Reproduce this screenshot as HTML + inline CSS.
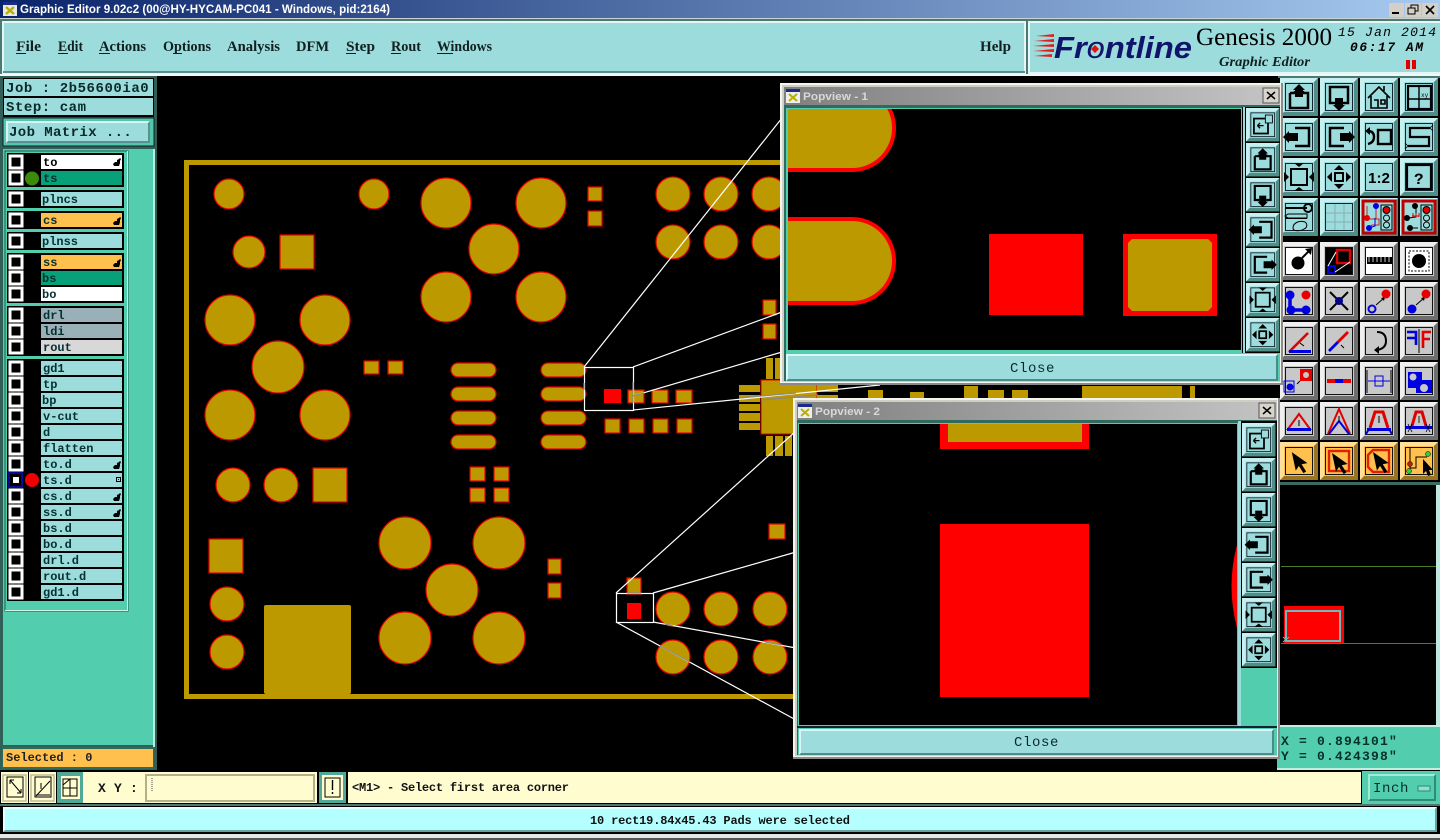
<!DOCTYPE html>
<html><head><meta charset="utf-8"><title>Graphic Editor</title>
<style>
html,body{margin:0;padding:0;background:#000;width:1440px;height:840px;overflow:hidden}
svg{display:block;position:absolute;left:0;top:0}
.m{font-family:"Liberation Mono",monospace;font-weight:bold;font-size:12px;fill:#0a2a2a}
.l{font-family:"Liberation Mono",monospace;font-weight:bold;font-size:12px;fill:#063030}
.s{font-family:"Liberation Serif",serif;font-weight:bold;font-size:15px;fill:#102020}
.g{font-family:"Liberation Mono",monospace;font-weight:bold;font-size:14px;fill:#0a2a2a;letter-spacing:.55px}
</style></head><body>
<svg width="1440" height="840" viewBox="0 0 1440 840" xmlns="http://www.w3.org/2000/svg">
<defs>
<linearGradient id="tb" x1="0" x2="1" y1="0" y2="0"><stop offset="0" stop-color="#0a246a"/><stop offset="1" stop-color="#a6caf0"/></linearGradient>
<linearGradient id="pt" x1="0" x2="1" y1="0" y2="0"><stop offset="0" stop-color="#808080"/><stop offset="1" stop-color="#c4c4c4"/></linearGradient>

<g id="bt"><rect width="38" height="38" fill="#4f8f88"/><polygon points="0,0 38,0 34,4 4,4 4,34 0,38" fill="#c9f0f0"/><rect x="4" y="4" width="30" height="30" fill="#9cdcdc"/><rect x="5.5" y="5.5" width="27" height="27" fill="none" stroke="#123" stroke-width="1"/></g>
<g id="bg"><rect width="38" height="38" fill="#6e6e6e"/><polygon points="0,0 38,0 34,4 4,4 4,34 0,38" fill="#efefef"/><rect x="4" y="4" width="30" height="30" fill="#c8c8c8"/><rect x="5.5" y="5.5" width="27" height="27" fill="none" stroke="#111" stroke-width="1"/></g>
<g id="bw"><rect width="38" height="38" fill="#6e6e6e"/><polygon points="0,0 38,0 34,4 4,4 4,34 0,38" fill="#efefef"/><rect x="4" y="4" width="30" height="30" fill="#c8c8c8"/><rect x="5.5" y="5.5" width="27" height="27" fill="#fff" stroke="#111" stroke-width="1"/></g>
<g id="bo"><rect width="38" height="38" fill="#9a7420"/><polygon points="0,0 38,0 34,4 4,4 4,34 0,38" fill="#ffe09a"/><rect x="4" y="4" width="30" height="30" fill="#ffc04d"/><rect x="5.5" y="5.5" width="27" height="27" fill="none" stroke="#111" stroke-width="1"/></g>
<g id="br"><rect width="38" height="38" fill="#4f8f88"/><polygon points="0,0 38,0 34,4 4,4 4,34 0,38" fill="#c9f0f0"/><rect x="3" y="3" width="32" height="32" fill="#9cdcdc" stroke="#c00000" stroke-width="3"/></g>

<g id="iup"><path d="M10 15h5v-2M23 13v2h5v15H10V15" fill="none" stroke="#000" stroke-width="2.5"/><polygon points="19,6 25,12 23,12 23,19 15,19 15,12 13,12"/></g>
<g id="idn"><path d="M15 25h-5V9h18v16h-5" fill="none" stroke="#000" stroke-width="2.5"/><polygon points="19,33 25,27 23,27 23,20 15,20 15,27 13,27"/></g>
<g id="ilf"><path d="M15 10h14v18H15" fill="none" stroke="#000" stroke-width="2.5"/><polygon points="3,19 9,13 9,15 18,15 18,23 9,23 9,25"/></g>
<g id="irt"><path d="M24 10H10v18h14" fill="none" stroke="#000" stroke-width="2.5"/><polygon points="35,19 29,13 29,15 20,15 20,23 29,23 29,25"/></g>
<g id="ifit"><rect x="11" y="11" width="16" height="16" fill="none" stroke="#000" stroke-width="2"/><polygon points="19,9 14,5 24,5"/><polygon points="19,29 14,33 24,33"/><polygon points="9,19 4,14 4,24"/><polygon points="29,19 34,14 34,24"/></g>
<g id="izoom"><rect x="15" y="15" width="8" height="8" fill="none" stroke="#000" stroke-width="2"/><polygon points="19,7 14,12 24,12"/><polygon points="19,31 14,26 24,26"/><polygon points="7,19 12,14 12,24"/><polygon points="31,19 26,14 26,24"/></g>
<g id="ifirst"><rect x="9" y="12" width="16" height="17" fill="none" stroke="#000" stroke-width="2"/><rect x="22" y="8" width="8" height="9" fill="#9cdcdc" stroke="#000"/><path d="M20 20h-7M13 20l3-3M13 20l3 3" stroke="#000" fill="none" stroke-width="1.5"/></g>
</defs>

<rect width="1440" height="840" fill="#000"/>
<!-- Title bar -->
<rect width="1440" height="18" fill="url(#tb)"/>
<rect y="18" width="1440" height="1" fill="#c8d4d4"/>
<g><rect x="3" y="2" width="14" height="14" fill="#e8e8e8"/><rect x="3" y="2" width="14" height="3" fill="#1a2a8a"/><path d="M6 7l8 7M14 7l-8 7" stroke="#b8b000" stroke-width="2.4"/></g>
<text x="20" y="13" textLength="370" lengthAdjust="spacingAndGlyphs" font-family="Liberation Sans,sans-serif" font-weight="bold" font-size="12" fill="#fff">Graphic Editor 9.02c2 (00@HY-HYCAM-PC041 - Windows, pid:2164)</text>
<g><rect x="1389" y="3" width="15" height="14" fill="#d4d0c8"/><rect x="1392" y="12" width="7" height="2"/><rect x="1405" y="3" width="16" height="14" fill="#d4d0c8"/><rect x="1411" y="5" width="7" height="6" fill="none" stroke="#000"/><rect x="1408" y="8" width="7" height="6" fill="#d4d0c8" stroke="#000"/><rect x="1422" y="3" width="16" height="14" fill="#d4d0c8"/><path d="M1426 6l8 8M1434 6l-8 8" stroke="#000" stroke-width="1.6"/></g>

<!-- Menu bar -->
<rect x="0" y="19" width="1440" height="57" fill="#4a7a72"/>
<rect x="2" y="21" width="1024" height="53" fill="#e4f6f6"/><rect x="4" y="23" width="1020" height="49" fill="#9cdcdc"/><rect x="3" y="71" width="1022" height="2" fill="#5c8f8c"/>
<rect x="1028" y="21" width="412" height="53" fill="#e4f6f6"/><rect x="1030" y="23" width="410" height="49" fill="#9cdcdc"/>
<rect y="74" width="1440" height="2" fill="#eefafa"/>
<g>
<text class="s" x="16" y="51" textLength="25" lengthAdjust="spacingAndGlyphs">File</text><text class="s" x="58" y="51" textLength="25" lengthAdjust="spacingAndGlyphs">Edit</text><text class="s" x="99" y="51" textLength="47" lengthAdjust="spacingAndGlyphs">Actions</text><text class="s" x="163" y="51" textLength="48" lengthAdjust="spacingAndGlyphs">Options</text><text class="s" x="227" y="51" textLength="53" lengthAdjust="spacingAndGlyphs">Analysis</text><text class="s" x="296" y="51" textLength="33" lengthAdjust="spacingAndGlyphs">DFM</text><text class="s" x="346" y="51" textLength="29" lengthAdjust="spacingAndGlyphs">Step</text><text class="s" x="391" y="51" textLength="30" lengthAdjust="spacingAndGlyphs">Rout</text><text class="s" x="437" y="51" textLength="55" lengthAdjust="spacingAndGlyphs">Windows</text><text class="s" x="980" y="51" textLength="31" lengthAdjust="spacingAndGlyphs">Help</text>
</g>
<g fill="#102020"><rect x="16" y="53" width="10" height="1"/><rect x="58" y="53" width="10" height="1"/><rect x="99" y="53" width="11" height="1"/><rect x="173" y="53" width="9" height="1"/><rect x="346" y="53" width="10" height="1"/><rect x="391" y="53" width="10" height="1"/><rect x="437" y="53" width="16" height="1"/></g>

<!-- Logo -->
<g fill="#e02020"><polygon points="1036,36 1054,34 1054,37"/><polygon points="1034,41 1054,39 1054,42"/><polygon points="1033,46 1054,44 1054,47"/><polygon points="1033,51 1054,49 1054,52"/><polygon points="1034,56 1052,54 1052,57"/></g>
<text x="1054" y="58" textLength="138" lengthAdjust="spacingAndGlyphs" font-family="Liberation Sans,sans-serif" font-weight="bold" font-style="italic" font-size="31" fill="#10146a">Fr<tspan font-weight="normal">o</tspan>ntline</text>
<polygon points="1095,45 1099,49 1095,53 1091,49" fill="#e01010"/>
<text x="1196" y="45" textLength="136" lengthAdjust="spacingAndGlyphs" font-family="Liberation Serif,serif" font-size="25" fill="#000">Genesis 2000</text>
<text x="1219" y="66" textLength="91" lengthAdjust="spacingAndGlyphs" font-family="Liberation Serif,serif" font-weight="bold" font-style="italic" font-size="14" fill="#102020">Graphic Editor</text>
<text x="1338" y="36" textLength="98" font-family="Liberation Mono,monospace" font-style="italic" font-size="13" fill="#000">15 Jan 2014</text>
<text x="1350" y="51" textLength="73" font-family="Liberation Mono,monospace" font-style="italic" font-weight="bold" font-size="13" fill="#000">06:17 AM</text>
<rect x="1406" y="60" width="4" height="9" fill="#e00000"/><rect x="1412" y="60" width="4" height="9" fill="#e00000"/>

<!-- Left panel top -->
<rect x="0" y="76" width="157" height="694" fill="#2f5f56"/>
<rect x="3" y="78" width="151" height="39" fill="#000"/>
<rect x="4" y="79" width="149" height="17" fill="#9cdcdc"/><rect x="4" y="98" width="149" height="17" fill="#9cdcdc"/>
<text class="g" x="6" y="92">Job : 2b56600ia0</text>
<text class="g" x="6" y="111">Step: cam</text>
<rect x="3" y="118" width="151" height="28" fill="#52c8aa" stroke="#123" stroke-width="1"/>
<rect x="6" y="121" width="144" height="22" fill="#5a9090"/><polygon points="6,121 150,121 148,123 8,123 8,141 6,143" fill="#d8f4f4"/><rect x="8" y="123" width="140" height="18" fill="#9cdcdc"/>
<text class="g" x="9" y="136" style="letter-spacing:.4px">Job Matrix ...</text>

<!-- Layer panel -->
<rect x="0" y="147" width="155" height="600" fill="#2f5f56"/>
<rect x="3" y="149" width="150" height="596" fill="#52cdad"/>
<rect x="153" y="149" width="2" height="598" fill="#b8eedd"/>
<rect x="5" y="151" width="123" height="460" fill="#52cdad" stroke="#1f5a4c" stroke-width="1"/>
<rect x="127" y="151" width="1" height="460" fill="#cff3e6"/><rect x="5" y="610" width="123" height="1" fill="#cff3e6"/>
<g fill="#000"><rect x="7" y="153" width="117" height="34"/><rect x="7" y="190" width="117" height="18"/><rect x="7" y="211" width="117" height="18"/><rect x="7" y="232" width="117" height="18"/><rect x="7" y="253" width="117" height="50"/><rect x="7" y="306" width="117" height="50"/><rect x="7" y="359" width="117" height="242"/></g>
<g fill="#9cdcdc">
<rect x="41" y="155" width="81" height="14" fill="#fff"/><rect x="41" y="171" width="81" height="14" fill="#08a078"/><rect x="41" y="192" width="81" height="14"/><rect x="41" y="213" width="81" height="14" fill="#ffc04d"/><rect x="41" y="234" width="81" height="14"/><rect x="41" y="255" width="81" height="14" fill="#ffc04d"/><rect x="41" y="271" width="81" height="14" fill="#08a078"/><rect x="41" y="287" width="81" height="14" fill="#fff"/><rect x="41" y="308" width="81" height="14" fill="#9ab0b8"/><rect x="41" y="324" width="81" height="14" fill="#9ab0b8"/><rect x="41" y="340" width="81" height="14" fill="#d8d8d8"/>
<rect x="41" y="361" width="81" height="14"/><rect x="41" y="377" width="81" height="14"/><rect x="41" y="393" width="81" height="14"/><rect x="41" y="409" width="81" height="14"/><rect x="41" y="425" width="81" height="14"/><rect x="41" y="441" width="81" height="14"/><rect x="41" y="457" width="81" height="14"/><rect x="41" y="473" width="81" height="14"/><rect x="41" y="489" width="81" height="14"/><rect x="41" y="505" width="81" height="14"/><rect x="41" y="521" width="81" height="14"/><rect x="41" y="537" width="81" height="14"/><rect x="41" y="553" width="81" height="14"/><rect x="41" y="569" width="81" height="14"/><rect x="41" y="585" width="81" height="14"/>
</g>
<g fill="none" stroke="#fff" stroke-width="3">
<rect x="10" y="156" width="12" height="12"/><rect x="10" y="172" width="12" height="12"/><rect x="10" y="193" width="12" height="12"/><rect x="10" y="214" width="12" height="12"/><rect x="10" y="235" width="12" height="12"/><rect x="10" y="256" width="12" height="12"/><rect x="10" y="272" width="12" height="12"/><rect x="10" y="288" width="12" height="12"/><rect x="10" y="309" width="12" height="12"/><rect x="10" y="325" width="12" height="12"/><rect x="10" y="341" width="12" height="12"/><rect x="10" y="362" width="12" height="12"/><rect x="10" y="378" width="12" height="12"/><rect x="10" y="394" width="12" height="12"/><rect x="10" y="410" width="12" height="12"/><rect x="10" y="426" width="12" height="12"/><rect x="10" y="442" width="12" height="12"/><rect x="10" y="458" width="12" height="12"/><rect x="10" y="490" width="12" height="12"/><rect x="10" y="506" width="12" height="12"/><rect x="10" y="522" width="12" height="12"/><rect x="10" y="538" width="12" height="12"/><rect x="10" y="554" width="12" height="12"/><rect x="10" y="570" width="12" height="12"/><rect x="10" y="586" width="12" height="12"/>
</g>
<rect x="8" y="472" width="15" height="16" fill="#0a0a90"/><rect x="10" y="474" width="11" height="12" fill="#000"/><rect x="13" y="477" width="6" height="6" fill="#fff"/>
<circle cx="32" cy="178.5" r="7" fill="#3c8a0c"/><circle cx="32" cy="480" r="7" fill="#f00000"/>
<text class="l" x="43" y="166" style="fill:#000">to</text><text class="l" x="43" y="182">ts</text><text class="l" x="42" y="203">plncs</text><text class="l" x="43" y="224">cs</text><text class="l" x="42" y="245">plnss</text><text class="l" x="43" y="266">ss</text><text class="l" x="42" y="282">bs</text><text class="l" x="42" y="298">bo</text><text class="l" x="43" y="319">drl</text><text class="l" x="43" y="335">ldi</text><text class="l" x="43" y="351">rout</text><text class="l" x="43" y="372">gd1</text><text class="l" x="43" y="388">tp</text><text class="l" x="42" y="404">bp</text><text class="l" x="43" y="420">v-cut</text><text class="l" x="43" y="436">d</text><text class="l" x="43" y="452">flatten</text><text class="l" x="43" y="468">to.d</text><text class="l" x="43" y="484">ts.d</text><text class="l" x="43" y="500">cs.d</text><text class="l" x="43" y="516">ss.d</text><text class="l" x="43" y="532">bs.d</text><text class="l" x="43" y="548">bo.d</text><text class="l" x="43" y="564">drl.d</text><text class="l" x="43" y="580">rout.d</text><text class="l" x="43" y="596">gd1.d</text>
<g fill="#000"><path d="M113 164l2-2h2v-2l2-1 1-1 1 1-1 2v2l-1 3h-5z"/><path d="M113 223l2-2h2v-2l2-1 1-1 1 1-1 2v2l-1 3h-5z"/><path d="M113 265l2-2h2v-2l2-1 1-1 1 1-1 2v2l-1 3h-5z"/><path d="M113 467l2-2h2v-2l2-1 1-1 1 1-1 2v2l-1 3h-5z"/><path d="M113 499l2-2h2v-2l2-1 1-1 1 1-1 2v2l-1 3h-5z"/><path d="M113 515l2-2h2v-2l2-1 1-1 1 1-1 2v2l-1 3h-5z"/></g>
<rect x="116.500" y="477.500" width="4" height="4" fill="none" stroke="#000"/><rect x="118" y="479" width="1" height="1"/>

<!-- Selected -->
<rect x="2" y="747" width="152" height="22" fill="#2f6a5e"/><rect x="3" y="749" width="150" height="18" fill="#ffc04d"/>
<text class="m" x="6" y="761" style="fill:#222">Selected : 0</text>

<!-- PCB -->
<g fill="#bd9900"><rect x="184" y="160" width="620" height="5"/><rect x="184" y="160" width="5" height="538"/><rect x="184" y="694" width="620" height="5"/><rect x="264" y="605" width="87" height="89" rx="2"/></g>
<g fill="#bd9900" stroke="#e80000" stroke-width="1.2">
<circle cx="229" cy="194" r="15"/><circle cx="374" cy="194" r="15"/><circle cx="446" cy="203" r="25"/><circle cx="541" cy="203" r="25"/><circle cx="494" cy="249" r="25"/><circle cx="446" cy="297" r="25"/><circle cx="541" cy="297" r="25"/><circle cx="249" cy="252" r="16"/>
<rect x="280" y="235" width="34" height="34"/>
<circle cx="230" cy="320" r="25"/><circle cx="325" cy="320" r="25"/><circle cx="278" cy="367" r="26"/><circle cx="230" cy="415" r="25"/><circle cx="325" cy="415" r="25"/>
<rect x="588" y="187" width="14" height="14"/><rect x="588" y="211" width="14" height="15"/>
<circle cx="673" cy="194" r="17"/><circle cx="721" cy="194" r="17"/><circle cx="769" cy="194" r="17"/><circle cx="673" cy="242" r="17"/><circle cx="721" cy="242" r="17"/><circle cx="769" cy="242" r="17"/>
<rect x="763" y="300" width="13" height="15"/><rect x="763" y="324" width="13" height="15"/>
<rect x="364" y="361" width="15" height="13"/><rect x="388" y="361" width="15" height="13"/>
<rect x="451" y="363" width="45" height="14" rx="7"/><rect x="451" y="387" width="45" height="14" rx="7"/><rect x="451" y="411" width="45" height="14" rx="7"/><rect x="451" y="435" width="45" height="14" rx="7"/>
<rect x="541" y="363" width="45" height="14" rx="7"/><rect x="541" y="387" width="45" height="14" rx="7"/><rect x="541" y="411" width="45" height="14" rx="7"/><rect x="541" y="435" width="45" height="14" rx="7"/>
<rect x="628" y="390" width="16" height="13"/><rect x="652" y="390" width="16" height="13"/><rect x="676" y="390" width="16" height="13"/>
<rect x="605" y="419" width="15" height="14"/><rect x="629" y="419" width="15" height="14"/><rect x="653" y="419" width="15" height="14"/><rect x="677" y="419" width="15" height="14"/>
<rect x="769" y="524" width="16" height="15"/>
<rect x="470" y="467" width="15" height="14"/><rect x="494" y="467" width="15" height="14"/><rect x="470" y="488" width="15" height="14"/><rect x="494" y="488" width="15" height="14"/>
<circle cx="233" cy="485" r="17"/><circle cx="281" cy="485" r="17"/><rect x="313" y="468" width="34" height="34"/>
<rect x="209" y="539" width="34" height="34"/><circle cx="227" cy="604" r="17"/><circle cx="227" cy="652" r="17"/>
<circle cx="405" cy="543" r="26"/><circle cx="499" cy="543" r="26"/><circle cx="452" cy="590" r="26"/><circle cx="405" cy="638" r="26"/><circle cx="499" cy="638" r="26"/>
<rect x="548" y="559" width="13" height="15"/><rect x="548" y="583" width="13" height="15"/><rect x="627" y="578" width="14" height="16"/>
<circle cx="673" cy="609" r="17"/><circle cx="721" cy="609" r="17"/><circle cx="770" cy="609" r="17"/><circle cx="673" cy="657" r="17"/><circle cx="721" cy="657" r="17"/><circle cx="770" cy="657" r="17"/>
</g>
<rect x="604" y="389" width="17" height="14" fill="#f00"/><rect x="627" y="603" width="14" height="16" fill="#f00"/>
<!-- QFN -->
<g fill="#bd9900">
<rect x="761" y="380" width="56" height="54" stroke="#e00000" stroke-width="1"/>
<rect x="739" y="385" width="21" height="7"/><rect x="739" y="395" width="21" height="7"/><rect x="739" y="404" width="21" height="7"/><rect x="739" y="413" width="21" height="8"/><rect x="739" y="423" width="21" height="7"/>
<rect x="766" y="358" width="7" height="21"/><rect x="775" y="358" width="7" height="21"/><rect x="784" y="358" width="7" height="21"/><rect x="793" y="358" width="7" height="21"/>
<rect x="766" y="436" width="7" height="20"/><rect x="775" y="436" width="8" height="20"/><rect x="785" y="436" width="7" height="20"/>
<rect x="817" y="385" width="21" height="7"/><rect x="817" y="395" width="21" height="7"/>
<rect x="868" y="390" width="15" height="10"/><rect x="964" y="386" width="14" height="14"/><rect x="988" y="390" width="16" height="10"/><rect x="1012" y="390" width="16" height="10"/><rect x="1082" y="386" width="100" height="14"/><rect x="1190" y="386" width="5" height="14"/><rect x="910" y="392" width="14" height="8"/>
</g>
<!-- Zoom guide lines -->
<g fill="none" stroke="#fff" stroke-width="1.2">
<rect x="584.500" y="367.500" width="49" height="43"/>
<path d="M584 367L782 118M633 367L782 312M633 396L782 352M633 410L880 385"/>
<rect x="616.500" y="593.500" width="37" height="29"/>
<path d="M616 593L796 431M653 593L796 552M653 622L796 648M616 622L796 720"/>
</g>
<g fill="none" stroke="#888" stroke-width="1.2"><path d="M633 396L644 393M633 382L633 403M739 398L796 393M584 383L584 390M660 646L690 662M665 624L673 626M765 642L782 645M761 400L818 395M627 593L641 593"/></g>

<!-- Right toolbar -->
<rect x="1278" y="76" width="162" height="408" fill="#000"/>
<rect x="1278" y="76" width="162" height="2" fill="#4a7a72"/>
<use href="#bt" x="1280" y="78"/><use href="#bt" x="1320" y="78"/><use href="#bt" x="1360" y="78"/><use href="#bt" x="1400" y="78"/>
<use href="#bt" x="1280" y="118"/><use href="#bt" x="1320" y="118"/><use href="#bt" x="1360" y="118"/><use href="#bt" x="1400" y="118"/>
<use href="#bt" x="1280" y="158"/><use href="#bt" x="1320" y="158"/><use href="#bt" x="1360" y="158"/><use href="#bt" x="1400" y="158"/>
<use href="#bt" x="1280" y="198"/><use href="#bt" x="1320" y="198"/><use href="#br" x="1360" y="198"/><use href="#br" x="1400" y="198"/>
<use href="#bw" x="1280" y="242"/><use href="#bw" x="1320" y="242"/><use href="#bw" x="1360" y="242"/><use href="#bw" x="1400" y="242"/>
<use href="#bg" x="1280" y="282"/><use href="#bg" x="1320" y="282"/><use href="#bg" x="1360" y="282"/><use href="#bg" x="1400" y="282"/>
<use href="#bg" x="1280" y="322"/><use href="#bg" x="1320" y="322"/><use href="#bg" x="1360" y="322"/><use href="#bg" x="1400" y="322"/>
<use href="#bg" x="1280" y="362"/><use href="#bg" x="1320" y="362"/><use href="#bg" x="1360" y="362"/><use href="#bg" x="1400" y="362"/>
<use href="#bg" x="1280" y="402"/><use href="#bg" x="1320" y="402"/><use href="#bg" x="1360" y="402"/><use href="#bg" x="1400" y="402"/>
<use href="#bo" x="1280" y="442"/><use href="#bo" x="1320" y="442"/><use href="#bo" x="1360" y="442"/><use href="#bo" x="1400" y="442"/>
<!-- r0 -->
<use href="#iup" x="1280" y="78"/><use href="#idn" x="1320" y="78"/>
<g transform="translate(1360,78)" fill="none" stroke="#000" stroke-width="1.6"><path d="M8 20L19 9l11 11M11 18v12h16V18M14 22h4v8M21 22h4v4h-4zM24 8v5"/></g>
<g transform="translate(1400,78)" fill="none" stroke="#000"><rect x="8" y="8" width="23" height="23" stroke-width="2.2"/><path d="M19 8v23M8 21h23" stroke-width="1.4"/><text x="21" y="19" font-family="Liberation Mono,monospace" font-size="6" fill="#000" stroke="none">xy</text></g>
<!-- r1 -->
<use href="#ilf" x="1280" y="118"/><use href="#irt" x="1320" y="118"/>
<g transform="translate(1360,118)"><rect x="18" y="12" width="13" height="14" fill="none" stroke="#000" stroke-width="2.4"/><path d="M8 13c4 0 6 2 6 6s-2 6-6 7" fill="none" stroke="#000" stroke-width="2.4"/><polygon points="5,13 10,9 10,17"/></g>
<g transform="translate(1400,118)" fill="none" stroke="#000" stroke-width="2.2"><path d="M30 10H10v9h19v9H8"/><path d="M30 10l3-3M30 10l3 3M8 28l-3-3M8 28l-3 3" stroke-width=".8"/></g>
<!-- r2 -->
<use href="#ifit" x="1280" y="158"/><use href="#izoom" x="1320" y="158"/>
<text x="1368" y="183" font-family="Liberation Sans,sans-serif" font-weight="bold" font-size="15" textLength="22" lengthAdjust="spacingAndGlyphs">1:2</text>
<rect x="1407" y="165" width="24" height="24" fill="none" stroke="#000" stroke-width="2.2"/>
<text x="1414" y="184" font-family="Liberation Mono,monospace" font-weight="bold" font-size="16">?</text>
<!-- r3 -->
<g transform="translate(1280,198)"><path d="M5 10h22M5 20h22" stroke="#000" stroke-width="2"/><circle cx="28" cy="10" r="4" fill="none" stroke="#000" stroke-width="2"/><path d="M8 16h19v4H8l-3-2z" fill="#9cdcdc" stroke="#000"/><path d="M13 30c0-5 6-8 12-6 3 2 2 6-1 7-3 2-11 3-11-1z" fill="none" stroke="#000"/></g>
<g transform="translate(1320,198)" stroke="#88b0b0" fill="none"><path d="M15 6v26M24 6v26M6 15h26M6 24h26"/></g>
<g transform="translate(1360,198)"><rect x="21" y="7" width="11" height="25" fill="none" stroke="#000"/><circle cx="26.500" cy="12" r="3.500" fill="#e00000" stroke="#000"/><circle cx="26.500" cy="20" r="3" fill="none" stroke="#000"/><circle cx="26.500" cy="27" r="3" fill="none" stroke="#000"/><path d="M7 8v13h12v6h-7l-3 3M16 8v13" fill="none" stroke="#d02020"/><circle cx="16" cy="8" r="3" fill="#0000e0"/><circle cx="7" cy="20" r="3" fill="#e00000"/><circle cx="9" cy="30" r="3" fill="#0000e0"/><path d="M9 30l6-2v-8" fill="none" stroke="#0000e0"/></g>
<g transform="translate(1400,198)"><rect x="21" y="7" width="11" height="25" fill="none" stroke="#000"/><circle cx="26.500" cy="12" r="3.500" fill="#e00000" stroke="#000"/><circle cx="26.500" cy="20" r="3" fill="none" stroke="#000"/><circle cx="26.500" cy="27" r="3" fill="none" stroke="#000"/><path d="M9 20l7-1V9M9 30l9 0" fill="none" stroke="#000"/><circle cx="15" cy="8" r="3"/><circle cx="7" cy="20" r="3"/><circle cx="10" cy="30" r="3"/><path d="M12 18h7M13 15v4M16 15v4M19 15v4" stroke="#e00000" fill="none"/></g>
<!-- r4 -->
<g transform="translate(1280,242)"><circle cx="18" cy="21" r="6.500"/><path d="M22 16l7-7" stroke="#000" stroke-width="2"/><polygon points="32,6 31,13 25,7"/></g>
<g transform="translate(1320,242)"><rect x="6" y="6" width="26" height="26"/><rect x="17" y="8" width="13" height="13" fill="none" stroke="#e00000" stroke-width="2.4"/><rect x="8" y="24" width="7" height="7" fill="none" stroke="#0000e0" stroke-width="2"/><path d="M16 10L8 24M30 20L15 30" stroke="#fff"/></g>
<g transform="translate(1360,242)"><rect x="7" y="15" width="25" height="7"/><path d="M9 13v8M13 13v8M17 13v8M21 13v8M25 13v8M29 13v8" stroke="#fff" transform="translate(0,-1)" stroke-width=".8"/></g>
<g transform="translate(1400,242)"><rect x="9" y="9" width="20" height="20" fill="none" stroke="#000" stroke-dasharray="2 1.500"/><circle cx="19" cy="19" r="7"/></g>
<!-- r5 -->
<g transform="translate(1280,282)"><path d="M10 14v14h15" fill="none" stroke="#0000e0" stroke-width="3.500"/><circle cx="10" cy="13" r="4.500" fill="#0000e0"/><circle cx="11" cy="28" r="4.500" fill="#0000e0"/><circle cx="26" cy="28" r="4.500" fill="#0000e0"/><circle cx="26" cy="13" r="4.500" fill="#e80000"/></g>
<g transform="translate(1320,282)"><path d="M10 10l18 18M28 10L10 28" stroke="#000" stroke-width="2"/><circle cx="19" cy="19" r="4" fill="#00008a"/></g>
<g transform="translate(1360,282)"><circle cx="12" cy="27" r="3.500" fill="none" stroke="#0000e0" stroke-width="2"/><path d="M16 23l8-7" stroke="#000"/><polygon points="25,15 24,19 21,16"/><circle cx="26" cy="12" r="4.500" fill="#e80000"/></g>
<g transform="translate(1400,282)"><circle cx="12" cy="27" r="4.500" fill="#0000e0"/><path d="M16 23l8-7" stroke="#000"/><polygon points="25,15 24,19 21,16"/><circle cx="26" cy="12" r="4.500" fill="#e80000"/></g>
<!-- r6 -->
<g transform="translate(1280,322)"><path d="M9 30L28 11" stroke="#e00000" stroke-width="2.600"/><rect x="9" y="28" width="22" height="3" fill="#0000e0"/><path d="M24 24l-4-3" stroke="#000"/></g>
<g transform="translate(1320,322)"><path d="M9 29l9-9" stroke="#0000e0" stroke-width="2.800"/><path d="M18 20l10-10" stroke="#e00000" stroke-width="2.800"/><path d="M24 26l-3-3" stroke="#000"/></g>
<g transform="translate(1360,322)"><path d="M17 10c7 0 9 4 9 9s-3 8-9 9" fill="none" stroke="#000" stroke-width="2"/><polygon points="14,28 19,24 19,32"/></g>
<g transform="translate(1400,322)"><path d="M19 7v24" stroke="#000"/><path d="M7 10h9v13M7 16h9" fill="none" stroke="#0000e0" stroke-width="2.600"/><path d="M31 10h-8v16M23 17h7" fill="none" stroke="#e00000" stroke-width="2.600"/></g>
<!-- r7 -->
<g transform="translate(1280,362)"><rect x="4" y="19" width="10" height="11" fill="none" stroke="#0000e0"/><circle cx="10" cy="25" r="3.500" fill="#0000e0"/><rect x="20" y="7" width="12" height="12" fill="#e80000"/><circle cx="26" cy="13" r="3" fill="#c8c8c8"/><path d="M17 22l3-3" stroke="#000"/></g>
<g transform="translate(1320,362)"><rect x="7" y="17" width="24" height="4" fill="#e80000"/><rect x="15" y="17" width="8" height="4" fill="#0000e0"/></g>
<g transform="translate(1360,362)"><path d="M7 8v23M31 8v23" stroke="#000"/><path d="M8 19h22" stroke="#0000e0"/><rect x="15" y="14" width="8" height="10" fill="none" stroke="#0000e0"/></g>
<g transform="translate(1400,362)" fill="#0000e0"><rect x="8" y="10" width="14" height="16"/><rect x="16" y="18" width="16" height="13"/><circle cx="13" cy="15" r="3.500" fill="#c8c8c8"/><circle cx="24" cy="26" r="4" fill="#c8c8c8"/></g>
<!-- r8 -->
<g transform="translate(1280,402)"><path d="M8 27L19 12l11 15z" fill="none" stroke="#e00000" stroke-width="2"/><rect x="7" y="26" width="24" height="3" fill="#0000e0"/><path d="M19 18v6" stroke="#000"/></g>
<g transform="translate(1320,402)" fill="none"><path d="M8 32L19 7l11 25" stroke="#e00000" stroke-width="2"/><path d="M9 32l10-13 10 13" stroke="#0000e0" stroke-width="2"/><path d="M19 14v6" stroke="#000"/></g>
<g transform="translate(1360,402)" fill="none"><path d="M10 26l5-16h8l5 16" stroke="#e00000" stroke-width="3"/><rect x="7" y="26" width="24" height="3" fill="#0000e0"/><path d="M6 32l3-5M32 32l-3-5" stroke="#0000e0" stroke-width="2"/><path d="M19 14v7" stroke="#000"/></g>
<g transform="translate(1400,402)" fill="none"><path d="M12 24l4-14h6l4 14" stroke="#e00000" stroke-width="3"/><rect x="6" y="24" width="26" height="3" fill="#0000e0"/><path d="M8 22l4 8M12 22l-4 8M26 22l4 8M30 22l-4 8M19 14v7" stroke="#000" stroke-width=".8"/></g>
<!-- r9 -->
<polygon points="1294,451 1294,470 1298,466 1301,474 1304,473 1301,465 1307,465" transform="rotate(-12 1298 462)"/>
<g transform="translate(1320,442)"><rect x="9" y="9" width="20" height="20" fill="none" stroke="#e02000" stroke-width="2.400"/><polygon points="14,10 14,29 18,25 21,33 24,32 21,24 27,24" transform="rotate(-12 18 20)"/></g>
<g transform="translate(1360,442)"><path d="M13 8h16v22H13l-5-5V13z" fill="none" stroke="#e02000" stroke-width="2.400"/><polygon points="15,9 15,28 19,24 22,32 25,31 22,23 28,23" transform="rotate(-12 19 19)"/></g>
<g transform="translate(1400,442)"><path d="M10 6v16M10 23l0 3h6v-11h11" fill="none" stroke="#000"/><circle cx="10" cy="22" r="2.500" fill="#c02000" stroke="#000" stroke-width=".5"/><circle cx="9" cy="29" r="2.500" fill="#30d030" stroke="#000" stroke-width=".5"/><circle cx="28" cy="12" r="2.500" fill="#30d030" stroke="#000" stroke-width=".5"/><polygon points="23,17 23,32 26,29 28,34 31,33 29,28 33,28"/></g>

<!-- Right lower canvas -->
<rect x="1278" y="482" width="162" height="3" fill="#3f6a62"/>
<rect x="1278" y="485" width="158" height="241" fill="#000"/>
<rect x="1281" y="566" width="155" height="1" fill="#4a7c22"/><rect x="1281" y="643" width="155" height="1" fill="#4a7c22"/>
<rect x="1284" y="606" width="60" height="37" fill="#f00"/>
<rect x="1286" y="611" width="54" height="30" fill="none" stroke="#70b8c0" stroke-width="2"/>
<path d="M1283 637l6 5M1289 637l-6 5" stroke="#60c0c0"/>
<rect x="1436" y="485" width="4" height="241" fill="#c0e8e0"/>
<rect x="1277" y="725" width="163" height="45" fill="#52cdad"/><rect x="1277" y="725" width="163" height="2" fill="#c0f0e0"/><rect x="1277" y="768" width="163" height="2" fill="#c0f0e0"/>
<text x="1281" y="745" font-family="Liberation Mono,monospace" font-weight="bold" font-size="13" fill="#06302a" style="letter-spacing:1.2px">X = 0.894101"</text>
<text x="1281" y="760" font-family="Liberation Mono,monospace" font-weight="bold" font-size="13" fill="#06302a" style="letter-spacing:1.2px">Y = 0.424398"</text>

<!-- Popview 1 -->
<rect x="780" y="83" width="503" height="302" fill="#8a8a8a"/><rect x="780" y="83" width="501" height="300" fill="#f4f4ec"/><rect x="782" y="85" width="498" height="297" fill="#cfcfc8"/>
<rect x="784" y="87" width="496" height="18" fill="url(#pt)"/>
<rect x="786" y="89" width="14" height="14" fill="#eee"/><rect x="786" y="89" width="14" height="3" fill="#1a2a8a"/><path d="M789 94l8 7M797 94l-8 7" stroke="#b8b000" stroke-width="2"/>
<text x="803" y="100" textLength="65" lengthAdjust="spacingAndGlyphs" font-family="Liberation Sans,sans-serif" font-weight="bold" font-size="11" fill="#d8d8d8">Popview - 1</text>
<rect x="1263" y="88" width="16" height="15" fill="#d8d4cc" stroke="#555"/><path d="M1267 92l8 7M1275 92l-8 7" stroke="#000" stroke-width="1.500"/>
<rect x="784" y="105" width="496" height="276" fill="#2f6a5e"/>
<rect x="786" y="108" width="494" height="273" fill="#52cdad"/>
<rect x="788" y="109" width="453" height="241" fill="#000"/>
<rect x="1242" y="107" width="38" height="246" fill="#000"/>
<rect x="1243" y="107" width="2" height="246" fill="#9cdcdc"/>
<svg x="788" y="109" width="453" height="241" viewBox="788 109 453 241">
<path d="M780 86H852A42 42 0 0 1 852 170H780Z" fill="#bd9900" stroke="#f00" stroke-width="4"/>
<path d="M780 219H852A42 42 0 0 1 852 303H780Z" fill="#bd9900" stroke="#f00" stroke-width="4"/>
<rect x="989" y="234" width="94" height="81" fill="#f00"/>
<rect x="1123" y="234" width="94" height="82" fill="#f00"/>
<path d="M1132 239h76l4 4v64l-4 4h-76l-4-4v-64z" fill="#bd9900"/>
</svg>
<rect x="786" y="354" width="492" height="27" fill="#4a8c8c"/><polygon points="786,354 1278,354 1276,356 788,356 788,379 786,381" fill="#dcf6f6"/><rect x="788" y="356" width="488" height="23" fill="#9cdcdc"/>
<text class="m" x="1010" y="372" style="letter-spacing:.6px;font-weight:normal;font-size:14px">Close</text>
<g>
<use href="#bt" transform="translate(1246,108) scale(.88)"/><use href="#bt" transform="translate(1246,143) scale(.88)"/><use href="#bt" transform="translate(1246,178) scale(.88)"/><use href="#bt" transform="translate(1246,213) scale(.88)"/><use href="#bt" transform="translate(1246,248) scale(.88)"/><use href="#bt" transform="translate(1246,283) scale(.88)"/><use href="#bt" transform="translate(1246,318) scale(.88)"/>
<use href="#ifirst" transform="translate(1246,108) scale(.88)"/><use href="#iup" transform="translate(1246,143) scale(.88)"/><use href="#idn" transform="translate(1246,178) scale(.88)"/><use href="#ilf" transform="translate(1246,213) scale(.88)"/><use href="#irt" transform="translate(1246,248) scale(.88)"/><use href="#ifit" transform="translate(1246,283) scale(.88)"/><use href="#izoom" transform="translate(1246,318) scale(.88)"/>
</g>

<!-- Popview 2 -->
<rect x="793" y="398" width="487" height="361" fill="#8a8a8a"/><rect x="793" y="398" width="485" height="359" fill="#f4f4ec"/><rect x="795" y="400" width="482" height="356" fill="#cfcfc8"/>
<rect x="797" y="402" width="480" height="18" fill="url(#pt)"/>
<rect x="798" y="404" width="14" height="14" fill="#eee"/><rect x="798" y="404" width="14" height="3" fill="#1a2a8a"/><path d="M801 409l8 7M809 409l-8 7" stroke="#b8b000" stroke-width="2"/>
<text x="815" y="415" textLength="65" lengthAdjust="spacingAndGlyphs" font-family="Liberation Sans,sans-serif" font-weight="bold" font-size="11" fill="#d8d8d8">Popview - 2</text>
<rect x="1259" y="403" width="16" height="15" fill="#d8d4cc" stroke="#555"/><path d="M1263 407l8 7M1271 407l-8 7" stroke="#000" stroke-width="1.500"/>
<rect x="797" y="420" width="480" height="335" fill="#2f6a5e"/>
<rect x="798" y="423" width="479" height="332" fill="#52cdad"/>
<rect x="799" y="424" width="438" height="301" fill="#000"/>
<rect x="1238" y="421" width="3" height="305" fill="#9cdcdc"/>
<rect x="1241" y="421" width="36" height="247" fill="#000"/>
<rect x="940" y="424" width="149" height="25" fill="#f00"/><rect x="948" y="424" width="134" height="18" fill="#bd9900"/>
<rect x="940" y="524" width="149" height="173" fill="#f00"/>
<path d="M1237 545Q1226 586 1237 628Z" fill="#f00"/>
<rect x="797" y="726" width="480" height="2" fill="#123"/>
<rect x="799" y="729" width="475" height="26" fill="#4a8c8c"/><polygon points="799,729 1274,729 1272,731 801,731 801,753 799,755" fill="#dcf6f6"/><rect x="801" y="731" width="471" height="22" fill="#9cdcdc"/>
<text class="m" x="1014" y="746" style="letter-spacing:.6px;font-weight:normal;font-size:14px">Close</text>
<g>
<use href="#bt" transform="translate(1242,423) scale(.88)"/><use href="#bt" transform="translate(1242,458) scale(.88)"/><use href="#bt" transform="translate(1242,493) scale(.88)"/><use href="#bt" transform="translate(1242,528) scale(.88)"/><use href="#bt" transform="translate(1242,563) scale(.88)"/><use href="#bt" transform="translate(1242,598) scale(.88)"/><use href="#bt" transform="translate(1242,633) scale(.88)"/>
<use href="#ifirst" transform="translate(1242,423) scale(.88)"/><use href="#iup" transform="translate(1242,458) scale(.88)"/><use href="#idn" transform="translate(1242,493) scale(.88)"/><use href="#ilf" transform="translate(1242,528) scale(.88)"/><use href="#irt" transform="translate(1242,563) scale(.88)"/><use href="#ifit" transform="translate(1242,598) scale(.88)"/><use href="#izoom" transform="translate(1242,633) scale(.88)"/>
</g>

<!-- Bottom input bar -->
<rect x="0" y="771" width="1362" height="33" fill="#000"/>
<rect x="1" y="772" width="27" height="31" fill="#fffdd0"/><rect x="29" y="772" width="27" height="31" fill="#fffdd0"/>
<rect x="3" y="775" width="23" height="26" fill="none" stroke="#bdbc90" stroke-width="1.500"/><rect x="31" y="775" width="23" height="26" fill="none" stroke="#bdbc90" stroke-width="1.500"/>
<rect x="7" y="777" width="16" height="20" fill="none" stroke="#000"/><path d="M10 780l11 13M10 780v4M10 780h4M21 793v-4M21 793h-4" stroke="#000" fill="none"/>
<rect x="35" y="777" width="16" height="20" fill="none" stroke="#000"/><path d="M36 796l14-15M36 795h14M41 783v6" stroke="#000" fill="none"/>
<rect x="57" y="772" width="26" height="31" fill="#52a896"/><rect x="61" y="776" width="19" height="23" fill="#fffdd0"/><rect x="63" y="779" width="14" height="17" fill="none" stroke="#000"/><path d="M70 779v17M63 788h14M63 785l7-6" stroke="#000" fill="none"/>
<rect x="83" y="772" width="60" height="31" fill="#fffdd0"/>
<text class="m" x="98" y="792" style="font-size:13px;letter-spacing:.2px;fill:#111">X Y :</text>
<rect x="143" y="772" width="174" height="31" fill="#fffdd0"/><rect x="146" y="775" width="168" height="26" fill="none" stroke="#b4b088" stroke-width="2"/>
<path d="M152 778v14" stroke="#444" stroke-dasharray="1 1"/>
<rect x="317" y="772" width="2" height="31" fill="#000"/>
<rect x="319" y="772" width="27" height="31" fill="#52a896"/><rect x="322" y="775" width="21" height="25" fill="#fffdd0"/><rect x="325" y="778" width="15" height="19" fill="none" stroke="#000"/><path d="M332.500 780v10M332.500 792v2" stroke="#000" stroke-width="1.400"/>
<rect x="346" y="772" width="1" height="31" fill="#000"/>
<rect x="348" y="772" width="1013" height="31" fill="#fffdd0"/>
<text class="m" x="352" y="791" style="fill:#111" textLength="217">&lt;M1&gt; - Select first area corner</text>
<rect x="1362" y="771" width="78" height="33" fill="#52cdad"/>
<rect x="1368" y="774" width="68" height="27" fill="#2f8a76"/><polygon points="1368,774 1436,774 1434,776 1370,776 1370,799 1368,801" fill="#a0ead6"/><rect x="1370" y="776" width="64" height="23" fill="#52cdad"/>
<text x="1373" y="792" font-family="Liberation Mono,monospace" font-size="14" fill="#06302a" style="letter-spacing:.6px">Inch</text>
<rect x="1418" y="786" width="12" height="5" fill="#8ee0d0" stroke="#2f8a76"/>

<!-- Status bar -->
<rect x="0" y="804" width="1440" height="2" fill="#4a7a72"/>
<rect x="0" y="806" width="1440" height="28" fill="#000"/>
<rect x="3" y="807" width="1434" height="25" fill="#6aa0a0"/><polygon points="3,807 1437,807 1435,809 5,809 5,830 3,832" fill="#e4ffff"/><rect x="5" y="809" width="1430" height="21" fill="#b4ffff"/>
<text class="m" x="590" y="824" style="fill:#111" textLength="260">10 rect19.84x45.43 Pads were selected</text>
<rect x="0" y="834" width="1440" height="4" fill="#e4e8e4"/><rect x="0" y="838" width="1440" height="2" fill="#555"/>
</svg>
</body></html>
